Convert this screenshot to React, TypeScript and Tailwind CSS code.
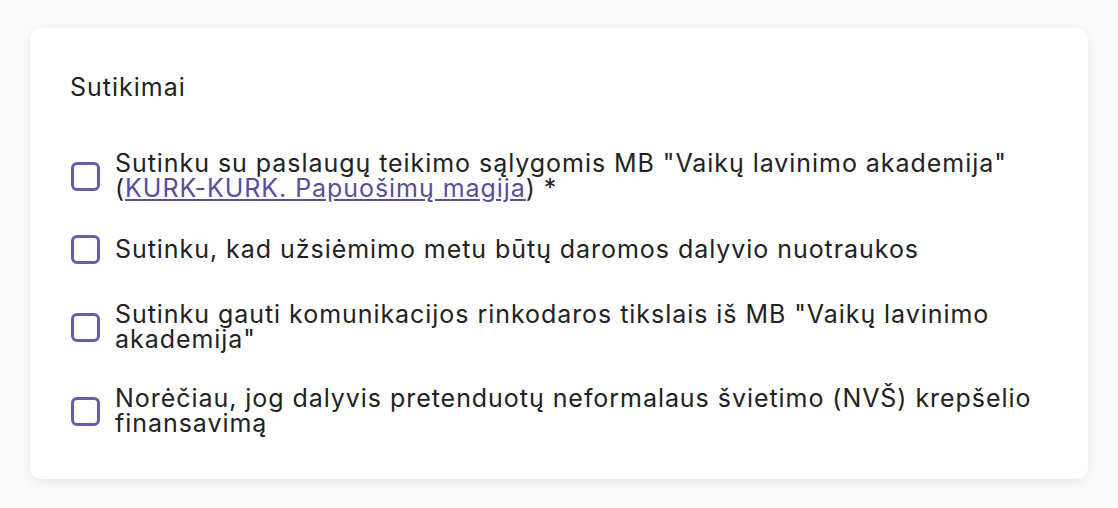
import { useState } from "react";

const items = [
  { id: "terms", gap: "mt-0" },
  { id: "photos", gap: "mt-[34px]", text: "Sutinku, kad užsiėmimo metu būtų daromos dalyvio nuotraukos" },
  { id: "marketing", gap: "mt-[38px]", text: 'Sutinku gauti komunikacijos rinkodaros tikslais iš MB "Vaikų lavinimo akademija"' },
  { id: "nvs", gap: "mt-[34px]", text: "Norėčiau, jog dalyvis pretenduotų neformalaus švietimo (NVŠ) krepšelio finansavimą" },
];

export default function App() {
  const [checked, setChecked] = useState<Record<string, boolean>>({});
  const toggle = (id: string) => setChecked((c) => ({ ...c, [id]: !c[id] }));

  return (
    <div className="min-h-[508px] bg-[#fafafa] px-[30px] pt-[28px] pb-[30px] font-['Inter',sans-serif] text-[#222222]">
      <div className="rounded-[12px] bg-white px-[40px] pt-[47px] pb-[43px] shadow-[0_3px_12px_rgba(0,0,0,0.07)]">
        <h2 className="text-[25px] leading-[25px] font-normal tracking-[1px]">Sutikimai</h2>

        <div className="mt-[51px] flex flex-col">
          {items.map((item) => (
            <label key={item.id} className={`${item.gap} flex items-center gap-[15px] cursor-pointer`}>
              <input
                type="checkbox"
                checked={!!checked[item.id]}
                onChange={() => toggle(item.id)}
                className="sr-only"
              />
              <span className="ml-[1px] flex h-[29px] w-[29px] shrink-0 items-center justify-center rounded-[6px] border-[3px] border-[#6a5ca8] bg-white">
                {checked[item.id] && (
                  <svg viewBox="0 0 24 24" className="h-[18px] w-[18px]" fill="none" stroke="#6a5ca8" strokeWidth="3" strokeLinecap="round" strokeLinejoin="round">
                    <path d="M5 12.5l4.5 4.5L19 7.5" />
                  </svg>
                )}
              </span>
              <span className="text-[25px] leading-[25px] tracking-[0.95px]">
                {item.id === "terms" ? (
                  <>
                    Sutinku su paslaugų teikimo sąlygomis MB "Vaikų lavinimo akademija" (
                    <a href="#" className="text-[#5b4d9c] underline underline-offset-2">
                      KURK-KURK. Papuošimų magija
                    </a>
                    ) *
                  </>
                ) : (
                  item.text
                )}
              </span>
            </label>
          ))}
        </div>
      </div>
    </div>
  );
}
